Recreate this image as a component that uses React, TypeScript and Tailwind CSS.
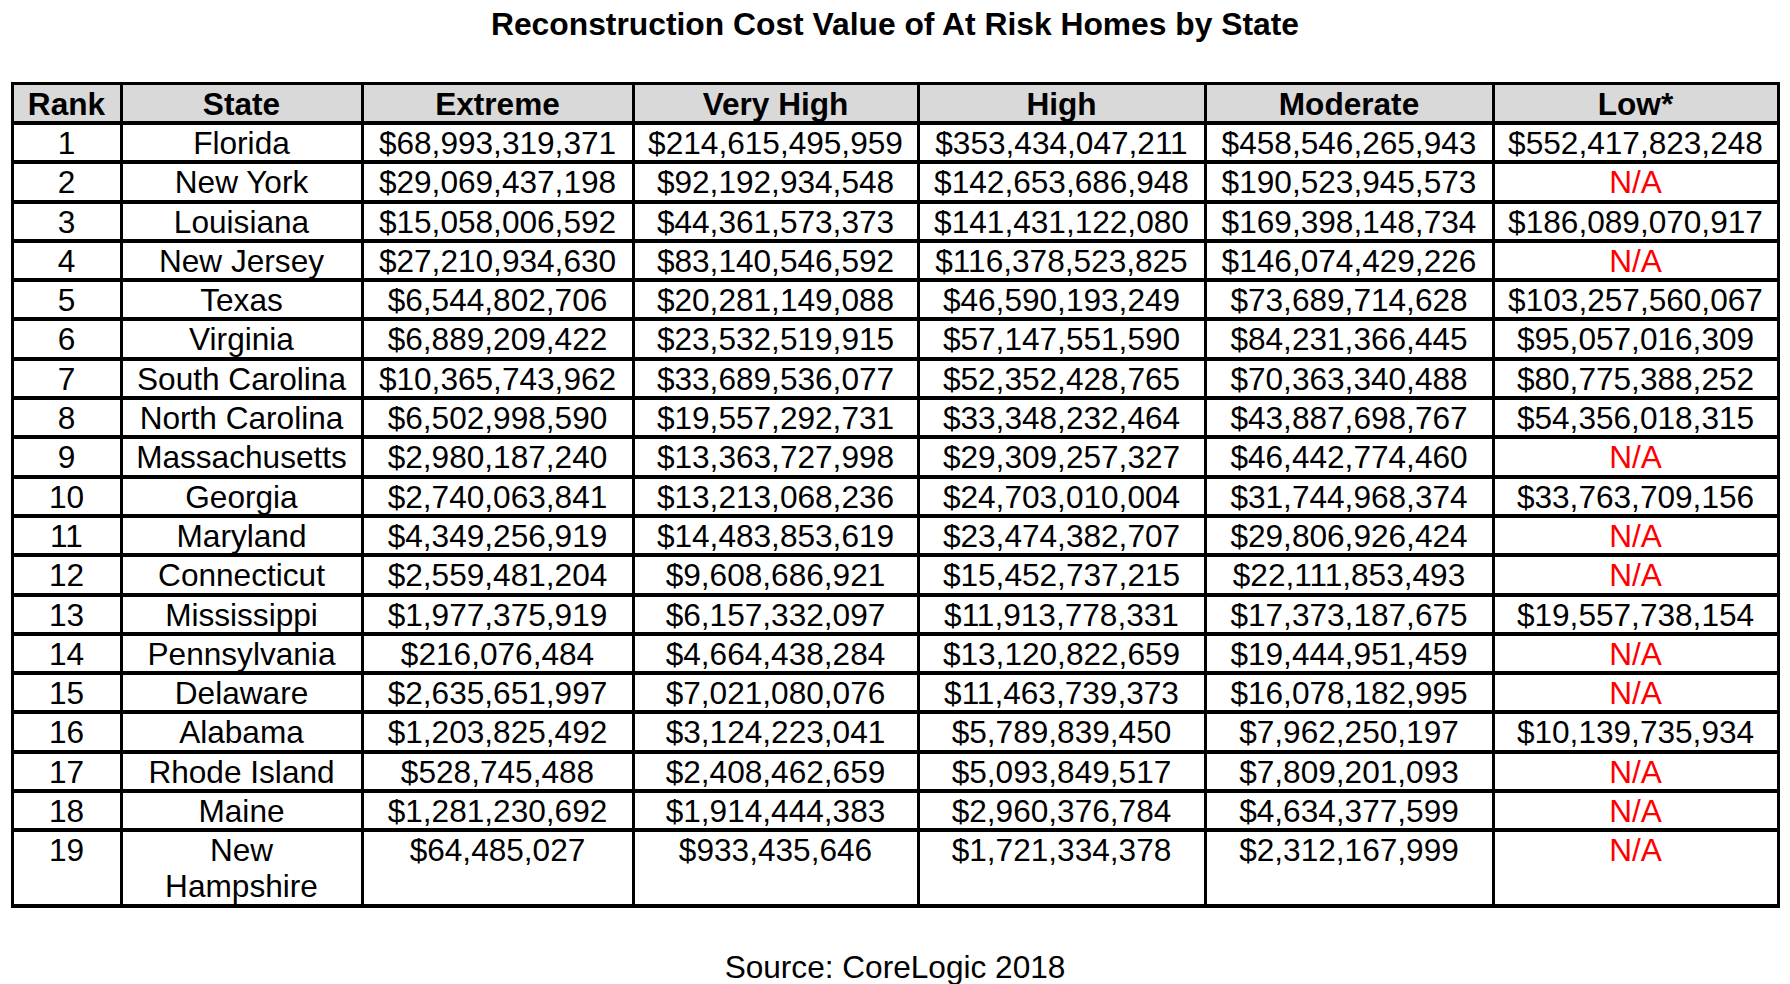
const columns = ["Rank", "State", "Extreme", "Very High", "High", "Moderate", "Low*"];

const rows: string[][] = [
  ["1", "Florida", "$68,993,319,371", "$214,615,495,959", "$353,434,047,211", "$458,546,265,943", "$552,417,823,248"],
  ["2", "New York", "$29,069,437,198", "$92,192,934,548", "$142,653,686,948", "$190,523,945,573", "N/A"],
  ["3", "Louisiana", "$15,058,006,592", "$44,361,573,373", "$141,431,122,080", "$169,398,148,734", "$186,089,070,917"],
  ["4", "New Jersey", "$27,210,934,630", "$83,140,546,592", "$116,378,523,825", "$146,074,429,226", "N/A"],
  ["5", "Texas", "$6,544,802,706", "$20,281,149,088", "$46,590,193,249", "$73,689,714,628", "$103,257,560,067"],
  ["6", "Virginia", "$6,889,209,422", "$23,532,519,915", "$57,147,551,590", "$84,231,366,445", "$95,057,016,309"],
  ["7", "South Carolina", "$10,365,743,962", "$33,689,536,077", "$52,352,428,765", "$70,363,340,488", "$80,775,388,252"],
  ["8", "North Carolina", "$6,502,998,590", "$19,557,292,731", "$33,348,232,464", "$43,887,698,767", "$54,356,018,315"],
  ["9", "Massachusetts", "$2,980,187,240", "$13,363,727,998", "$29,309,257,327", "$46,442,774,460", "N/A"],
  ["10", "Georgia", "$2,740,063,841", "$13,213,068,236", "$24,703,010,004", "$31,744,968,374", "$33,763,709,156"],
  ["11", "Maryland", "$4,349,256,919", "$14,483,853,619", "$23,474,382,707", "$29,806,926,424", "N/A"],
  ["12", "Connecticut", "$2,559,481,204", "$9,608,686,921", "$15,452,737,215", "$22,111,853,493", "N/A"],
  ["13", "Mississippi", "$1,977,375,919", "$6,157,332,097", "$11,913,778,331", "$17,373,187,675", "$19,557,738,154"],
  ["14", "Pennsylvania", "$216,076,484", "$4,664,438,284", "$13,120,822,659", "$19,444,951,459", "N/A"],
  ["15", "Delaware", "$2,635,651,997", "$7,021,080,076", "$11,463,739,373", "$16,078,182,995", "N/A"],
  ["16", "Alabama", "$1,203,825,492", "$3,124,223,041", "$5,789,839,450", "$7,962,250,197", "$10,139,735,934"],
  ["17", "Rhode Island", "$528,745,488", "$2,408,462,659", "$5,093,849,517", "$7,809,201,093", "N/A"],
  ["18", "Maine", "$1,281,230,692", "$1,914,444,383", "$2,960,376,784", "$4,634,377,599", "N/A"],
];

// last row wraps the state name onto two lines
const lastRow = ["19", "New\nHampshire", "$64,485,027", "$933,435,646", "$1,721,334,378", "$2,312,167,999", "N/A"];

const Cell = ({ value, tall }: { value: string; tall?: boolean }) => (
  <div
    className={`bg-white text-center pt-[1px] leading-[35.3px] whitespace-pre-line ${
      tall ? "h-[72px]" : "h-[35.3px]"
    } ${value === "N/A" ? "text-[#ff0000]" : "text-black"}`}
  >
    {value}
  </div>
);

const App = () => {
  return (
    <div
      className="w-full min-h-screen bg-white flex flex-col items-center text-black text-[31.6px]"
      style={{ fontFamily: '"Liberation Sans", Arial, sans-serif' }}
    >
      <h1 className="pt-[7px] leading-[35px] font-bold text-[31.8px]">
        Reconstruction Cost Value of At Risk Homes by State
      </h1>

      <div className="mt-[40px] grid grid-cols-[106px_238px_268px_282px_284px_285px_282px] gap-x-[3px] gap-y-[4px] bg-black px-[3px] pt-[3px] pb-[4px]">
        {columns.map((c) => (
          <div key={c} className="bg-[#d9d9d9] h-[36px] pt-[1px] leading-[36px] text-center font-bold">
            {c}
          </div>
        ))}

        {rows.map((r) =>
          r.map((v, i) => <Cell key={r[0] + "-" + i} value={v} />)
        )}

        {lastRow.map((v, i) => (
          <Cell key={"last-" + i} value={v} tall />
        ))}
      </div>

      <p className="mt-[42px] leading-[35px]">Source: CoreLogic 2018</p>
    </div>
  );
};

export default App;
